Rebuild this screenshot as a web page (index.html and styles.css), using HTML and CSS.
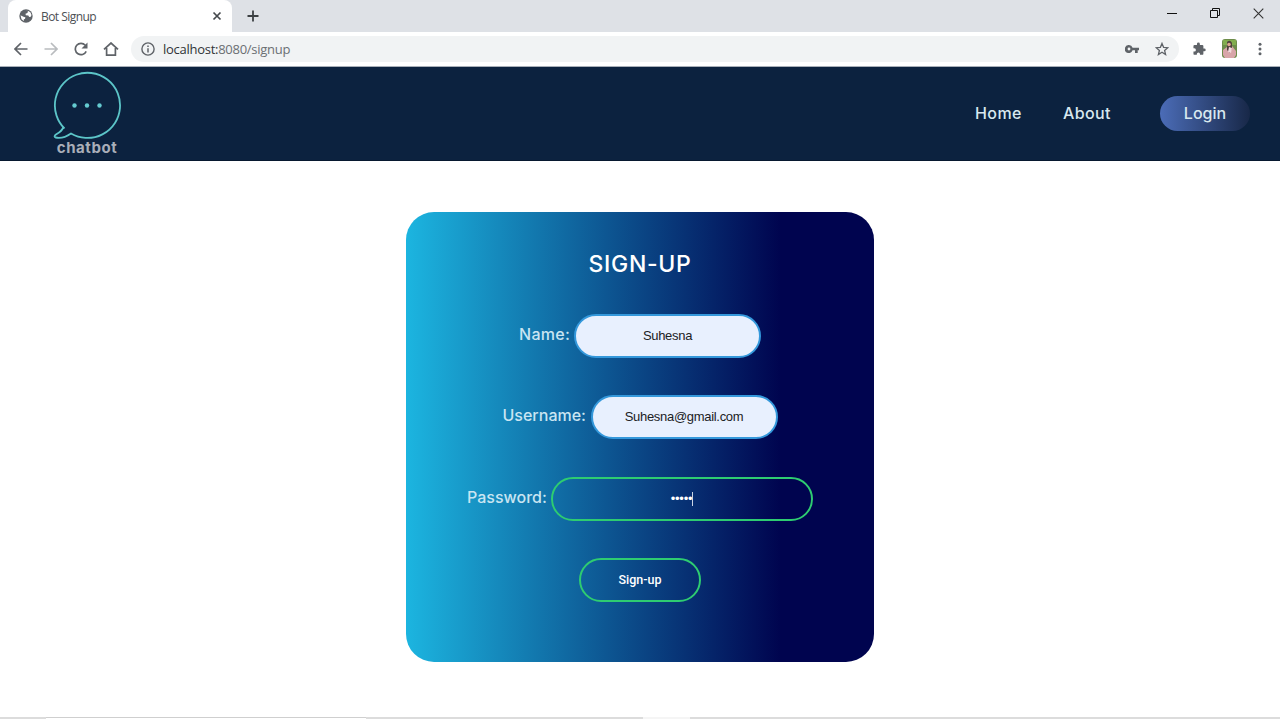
FILE: index.html
```html
<!DOCTYPE html>
<html lang="en">
<head>
<meta charset="utf-8">
<title>Bot Signup</title>
<link rel="stylesheet" href="styles.css">
</head>
<body>
<div class="tabbar">
  <div class="tab">
    <svg class="globe" width="14" height="14" viewBox="0 0 14 14"><circle cx="7" cy="7" r="6.7" fill="#5f6368"/><path d="M6.5 1.5L9 2.2 8.4 4 6.5 4.8 6.8 6.2 9.3 6.5 10.2 8 11.8 7.8 12.5 6 11.5 3.6 9.8 2.2M1.5 6.3L4.5 7.7 6.4 8.2 6 10 4.8 10.3 4.9 12 2.5 10.2Z" fill="#fff"/></svg>
    <span class="tab-title">Bot Signup</span>
    <svg class="tab-close" width="10" height="10" viewBox="0 0 10 10"><path d="M1.5 1.5l7 7m0-7l-7 7" stroke="#45494d" stroke-width="1.7"/></svg>
  </div>
  <svg class="plus" width="12" height="12" viewBox="0 0 12 12"><path d="M6 .5v11M.5 6h11" stroke="#3c4043" stroke-width="1.8"/></svg>
  <div class="window-buttons">
    <svg width="10" height="10" viewBox="0 0 10 10"><path d="M0 5.5h10" stroke="#111"/></svg>
    <svg width="10" height="10" viewBox="0 0 10 10"><path d="M.5 2.5h7v7h-7zM2.5 2.500V.5h7v7h-2" fill="none" stroke="#111"/></svg>
    <svg width="11" height="11" viewBox="0 0 11 11"><path d="M.7.7l9.6 9.6m0-9.6L.7 10.3" stroke="#333" stroke-width="1.1"/></svg>
  </div>
</div>
<div class="toolbar">
  <svg width="14" height="14" viewBox="0 0 14 14" class="nav-icon"><path d="M13.5 7H1.5M7 1L1 7l6 6" /></svg>
  <svg width="14" height="14" viewBox="0 0 14 14" class="nav-icon faded"><path d="M.5 7h12M7 1l6 6-6 6"/></svg>
  <svg width="14" height="14" viewBox="0 0 14 14" class="nav-icon"><path d="M12.2 9.4A5.7 5.7 0 1 1 11.3 3.2"/><path d="M13.5.5v6h-6z" class="solid"/></svg>
  <svg width="16" height="14" viewBox="0 0 16 14" class="nav-icon"><path d="M1 7.4L8 1l7 6.4M3.6 6v7.2h8.8V6"/></svg>
  <div class="address">
    <svg width="14" height="14" viewBox="0 0 14 14"><circle cx="7" cy="7" r="6.1" fill="none" stroke="#5f6368" stroke-width="1.4"/><path d="M7 6.2v4.2M7 3.4v1.5" stroke="#5f6368" stroke-width="1.5"/></svg>
    <span class="url"><span class="host">localhost:</span>8080/signup</span>
    <svg class="key" width="14" height="8" viewBox="0 0 14 8"><path fill-rule="evenodd" d="M4 0a4 4 0 1 0 3.6 5.3H10V8h2.7V5.3H14V2.7H7.6A4 4 0 0 0 4 0zm0 2.6a1.4 1.4 0 1 1 0 2.8 1.4 1.4 0 0 1 0-2.8z" fill="#5f6368"/></svg>
    <svg width="14" height="14" viewBox="0 0 14 14"><path d="M7 1.4l1.6 3.9 4.2.4-3.2 2.7 1 4.1L7 10.3l-3.6 2.2 1-4.1L1.200 5.700l4.200-.4z" fill="none" stroke="#5f6368" stroke-width="1.3"/></svg>
  </div>
  <svg class="puzzle" width="14" height="14" viewBox="0 0 24 24"><path d="M21 11h-1.500V7a2 2 0 0 0-2-2h-4V3.500a2.500 2.500 0 0 0-5 0V5h-4a2 2 0 0 0-2 2v3.800H4a2.700 2.700 0 0 1 0 5.400H2.500V20a2 2 0 0 0 2 2h3.800v-1.500a2.700 2.700 0 0 1 5.400 0V22h3.800a2 2 0 0 0 2-2v-4H21a2.500 2.500 0 0 0 0-5z" fill="#5f6368"/></svg>
  <svg class="avatar" width="15" height="19" viewBox="0 0 15 19"><rect width="15" height="19" rx="3" fill="#6d8c4a"/><path d="M1 1h13v5H1z" fill="#82ad4e"/><path d="M1 11l4-3 5-1 4 5v4l-2 3H3l-2-3z" fill="#d8a5a9"/><path d="M5 3q3-3 5 1v5l-2 5-3-3z" fill="#51413d"/><circle cx="7" cy="5.500" r="1.800" fill="#dba78f"/><path d="M7 8l3 1-1 5-3-1z" fill="#f3d8dc"/></svg>
  <svg class="more" width="4" height="14" viewBox="0 0 4 14"><g fill="#5f6368"><circle cx="2" cy="2.300" r="1.500"/><circle cx="2" cy="7" r="1.500"/><circle cx="2" cy="11.700" r="1.500"/></g></svg>
</div>
<header class="site-header">
  <div class="brand">
    <svg width="70" height="70" viewBox="0 0 70 70"><path d="M11.500 57.500A32.600 32.600 0 1 1 18 62.500C13 66 7 67.500 2.500 66.500C1 66 1.500 64.500 3 63.500C7 61 9 60 10.500 55.500" fill="none" stroke="#5cc5c8" stroke-width="1.800" stroke-linejoin="round"/><g fill="#65cbd0"><circle cx="21.500" cy="34.500" r="2.200"/><circle cx="34" cy="34.500" r="2.200"/><circle cx="46.500" cy="34.500" r="2.200"/></g></svg>
    <span class="brand-name">chatbot</span>
  </div>
  <nav class="menu"><a class="home">Home</a><a class="about">About</a><a class="login">Login</a></nav>
</header>
<main class="content">
  <form class="card">
    <h1 class="title">SIGN-UP</h1>
    <div class="row"><label class="name-label">Name:</label><div class="field filled">Suhesna</div></div>
    <div class="row"><label class="user-label">Username:</label><div class="field filled">Suhesna@gmail.com</div></div>
    <div class="row"><label class="pass-label">Password:</label><div class="field password"><span class="dots">•••••</span><span class="caret"></span></div></div>
    <div class="row"><button class="submit" type="button">Sign-up</button></div>
  </form>
</main>
<footer class="edge"><span class="edge-start"></span><span class="edge-search"></span><span class="edge-tasks"></span><span class="edge-active"></span><span class="edge-rest"></span></footer>
</body>
</html>
```
FILE: styles.css
```css
* { box-sizing: border-box; }
body { margin: 0; width: 1280px; height: 719px; overflow: hidden; display: flex; flex-direction: column; background: #fff; font-family: Inter, sans-serif; }
svg { display: block; flex: none; }
.tabbar { height: 32px; flex: none; background: #dee1e6; display: flex; padding-left: 8px; }
.tab { width: 224px; height: 32px; background: #fff; border-radius: 8px 8px 0 0; display: flex; align-items: center; padding: 0 10px 0 11px; }
.tab-title { margin-left: 8px; font: 12px "Open Sans", sans-serif; letter-spacing: -.55px; color: #4c5054; flex: 1; }
.plus { margin: 10px 0 0 15px; }
.window-buttons { margin-left: auto; padding: 8px 16px 0 0; display: flex; gap: 33px; }
.toolbar { height: 35px; flex: none; display: flex; align-items: center; padding: 0 18px 1px 14px; border-bottom: 1px solid #a8afb8; }
.nav-icon { margin-right: 16px; fill: none; stroke: #5f6368; stroke-width: 1.7; }
.nav-icon:nth-child(3) { margin-right: 15px; }
.nav-icon:nth-child(4) { margin-right: 12px; }
.faded { stroke: #b9bcbf; }
.solid { fill: #5f6368; stroke: none; }
.address { width: 1048px; height: 26px; border-radius: 13px; background: #f1f3f4; display: flex; align-items: center; padding: 0 10px 0 10px; }
.url { margin-left: 8px; flex: 1; font: 13px "Open Sans", sans-serif; letter-spacing: -.27px; color: #6b6f73; }
.host { color: #303336; }
.key { margin-right: 16px; }
.puzzle { margin-left: 13px; }
.avatar { margin-left: 16px; }
.more { margin-left: 21px; }
.site-header { height: 94px; flex: none; background: #0c223f; display: flex; justify-content: space-between; padding: 4px 30px 0 53px; border-bottom: 1px solid #07182f; }
.brand { width: 70px; display: flex; flex-direction: column; align-items: center; }
.brand-name { font-size: 15px; line-height: 18px; margin: -2px 2px 0 0; font-weight: 700; letter-spacing: .55px; color: #a9aeb9; }
.menu { display: flex; height: 35px; margin-top: 25px; align-items: center; font-size: 16px; font-weight: 500; color: #d8e8ef; }
.home { width: 88px; letter-spacing: .4px; }
.about { width: 97px; letter-spacing: .4px; }
.home, .about { line-height: 20px; padding-bottom: 1px; }
.login { width: 90px; height: 35px; line-height: 34px; border-radius: 18px; text-align: center; background: linear-gradient(to right, #4b6cb7, #182848); }
.content { flex: 1; padding-top: 51px; display: flex; justify-content: center; align-items: flex-start; }
.card { width: 468px; height: 450px; border-radius: 28px; background: linear-gradient(to right, #1cb5e0 0%, #00044f 80%); padding-top: 36px; }
.title { margin: 0 0 35px; height: 31px; line-height: 32px; text-align: center; font-size: 23px; font-weight: 450; letter-spacing: .7px; color: #fff; }
.row { height: 44px; margin-bottom: 37.3px; display: flex; justify-content: center; align-items: center; gap: 4px; }
label { font-size: 16px; font-weight: 500; line-height: 20px; margin-top: -4px; color: #c9e5f2; white-space: nowrap; }
.name-label { width: 51px; letter-spacing: .3px; }
.user-label { width: 84px; }
.pass-label { width: 80px; }
.field { width: 187px; height: 44px; border: 2px solid #3498db; border-radius: 22px; display: flex; align-items: center; justify-content: center; font: 13px "Liberation Sans", sans-serif; letter-spacing: -.3px; color: #202124; }
.filled { background: #e8f0fe; padding-bottom: 2px; }
.password { width: 262px; border-color: #2ecc71; color: #fff; }
.dots { font-size: 13px; letter-spacing: -.25px; }
.caret { width: 1px; height: 14px; background: #c9d4e5; }
.submit { width: 122px; height: 44px; padding: 0; border: 2px solid #2ecc71; border-radius: 22px; background: none; color: #fff; font: 500 12.5px Roboto, sans-serif; }
.edge { height: 2px; flex: none; display: flex; background: #dcdcdc; }
.edge-start { width: 46px; }
.edge-search { width: 320px; background: #fff; border-top: 1px solid #cfcfcf; }
.edge-tasks { width: 277px; }
.edge-active { width: 47px; background: #f5f5f5; }
.edge-rest { flex: 1; }
```
